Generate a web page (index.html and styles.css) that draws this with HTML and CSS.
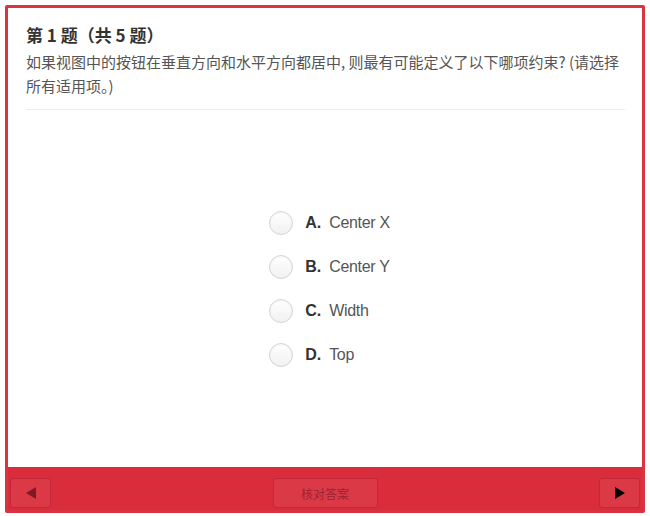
FILE: index.html
```html
<!DOCTYPE html>
<html lang="zh-CN">
<head>
<meta charset="utf-8">
<link rel="stylesheet" href="styles.css">
</head>
<body>
<div class="frame">
  <div class="content">
    <div class="header">
      <h1 class="title">第 1 题（共 5 题）</h1>
      <p class="question">如果视图中的按钮在垂直方向和水平方向都居中, 则最有可能定义了以下哪项约束? (请选择所有适用项。)</p>
    </div>
    <div class="options">
      <ul class="option-list">
        <li class="option"><span class="radio"></span><span class="letter">A.</span><span class="text">Center X</span></li>
        <li class="option"><span class="radio"></span><span class="letter">B.</span><span class="text">Center Y</span></li>
        <li class="option"><span class="radio"></span><span class="letter">C.</span><span class="text">Width</span></li>
        <li class="option"><span class="radio"></span><span class="letter">D.</span><span class="text">Top</span></li>
      </ul>
    </div>
  </div>
  <div class="footer">
    <button class="nav-btn prev" aria-label="上一题"><span class="arrow-left"></span></button>
    <button class="check-btn">核对答案</button>
    <button class="nav-btn next" aria-label="下一题"><span class="arrow-right"></span></button>
  </div>
</div>
</body>
</html>
```
FILE: styles.css
```css
* { box-sizing: border-box; }
html, body { margin: 0; padding: 0; background: #fff; }
body {
  padding: 5px;
  font-family: "Liberation Sans", "Noto Sans CJK SC", sans-serif;
}
.frame {
  width: 640px;
  height: 508px;
  border: 3px solid #d93240;
  border-radius: 2px;
  display: flex;
  flex-direction: column;
  background: #fff;
}
.content {
  flex: 1;
  display: flex;
  flex-direction: column;
  padding: 0 17px 0 18px;
}
.header {
  border-bottom: 1px solid #ececec;
  padding: 14px 0 11px;
}
.title {
  margin: 0;
  font-family: "Noto Sans CJK SC", sans-serif;
  font-size: 17px;
  font-weight: 700;
  line-height: 26px;
  color: #333;
}
.question {
  margin: 2px 0 0;
  font-family: "Noto Sans CJK SC", sans-serif;
  font-size: 15px;
  line-height: 24px;
  color: #555;
}
.options {
  flex: 1;
  display: flex;
  align-items: center;
  justify-content: center;
}
.option-list {
  list-style: none;
  margin: 0;
  padding: 0 0 0 8px;
  display: flex;
  flex-direction: column;
  gap: 20px;
}
.option {
  display: flex;
  align-items: center;
  height: 24px;
  font-size: 16px;
  color: #555;
}
.radio {
  width: 24px;
  height: 24px;
  border-radius: 50%;
  border: 1px solid #d4d4d4;
  background: linear-gradient(#ffffff, #f1f1f1);
  box-shadow: inset 0 1px 2px rgba(0,0,0,0.06);
  margin-right: 12px;
}
.letter {
  font-weight: 700;
  color: #333;
  width: 24px;
}
.text { letter-spacing: -0.3px; }
.footer {
  height: 43px;
  background: #d92d3b;
  display: flex;
  align-items: flex-end;
  justify-content: space-between;
  padding: 0 2px 2px 2px;
}
.nav-btn, .check-btn {
  height: 30px;
  border: 1px solid #c4263a;
  border-radius: 3px;
  background: #dc3947;
  display: flex;
  align-items: center;
  justify-content: center;
  padding: 0;
}
.nav-btn { width: 41px; }
.check-btn {
  width: 105px;
  font-family: "Noto Sans CJK SC", sans-serif;
  font-size: 12px;
  color: #9c2430;
}
.arrow-left {
  width: 0; height: 0;
  border-top: 6px solid transparent;
  border-bottom: 6px solid transparent;
  border-right: 10px solid #7d1a25;
}
.arrow-right {
  width: 0; height: 0;
  border-top: 6px solid transparent;
  border-bottom: 6px solid transparent;
  border-left: 10px solid #000;
}
```
